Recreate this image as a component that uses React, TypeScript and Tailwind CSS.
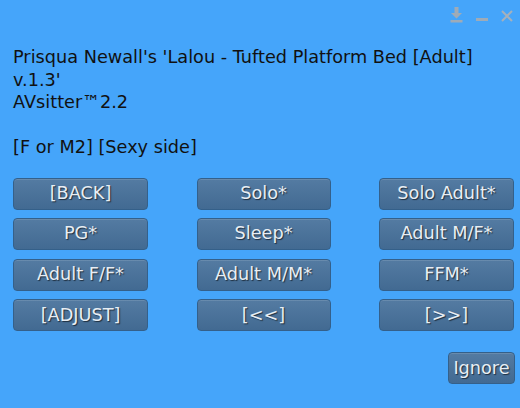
const buttons = [
  "[BACK]", "Solo*", "Solo Adult*",
  "PG*", "Sleep*", "Adult M/F*",
  "Adult F/F*", "Adult M/M*", "FFM*",
  "[ADJUST]", "[<<]", "[>>]",
];

function DlgButton({ label, className = "" }: { label: string; className?: string }) {
  return (
    <button
      type="button"
      className={`h-[32px] rounded-[4px] border border-[#34608a] bg-gradient-to-b from-[#547ba2] to-[#426a92] text-[17.7px] leading-none text-[#e8eef4] shadow-[inset_0_1px_0_rgba(255,255,255,0.12)] [text-shadow:1px_1px_1px_rgba(0,0,0,0.6)] ${className}`}
    >
      {label}
    </button>
  );
}

export default function App() {
  return (
    <div className="flex h-[408px] w-[520px] flex-col bg-[#45a5fa] font-['DejaVu_Sans',sans-serif]">
      {/* barra de título */}
      <div className="flex h-[26px] items-center justify-end gap-[13px] pr-[7px] pt-[2px]">
        <svg width="13" height="17" viewBox="0 0 13 17">
          <path d="M4.5 1h4v6h3.5l-5.5 5.5-5.5-5.5h3.5z" fill="#9fabb7" />
          <rect x="0.5" y="14" width="12" height="2.5" fill="#9fabb7" />
        </svg>
        <svg width="12" height="17" viewBox="0 0 12 17">
          <rect x="0" y="12" width="12" height="3" fill="#9fabb7" />
        </svg>
        <svg width="12" height="17" viewBox="0 0 12 17">
          <path d="M1 5l10 10M11 5l-10 10" stroke="#a4b0bc" strokeWidth="2" />
        </svg>
      </div>

      <div className="px-[13px] pt-[20px] text-[17.7px] leading-[22.5px] text-[#111]">
        <p>Prisqua Newall's 'Lalou - Tufted Platform Bed [Adult]</p>
        <p>v.1.3'</p>
        <p>AVsitter™2.2</p>
        <p>&nbsp;</p>
        <p>[F or M2] [Sexy side]</p>
      </div>

      <div className="mt-[19px] grid grid-cols-[135px_134px_135px] justify-between gap-y-[8.67px] px-[13px] pr-[6px]">
        {buttons.map((b) => (
          <DlgButton key={b} label={b} />
        ))}
      </div>

      <div className="mt-[21px] flex justify-end pr-[5px]">
        <DlgButton label="Ignore" className="w-[67px]" />
      </div>
    </div>
  );
}
